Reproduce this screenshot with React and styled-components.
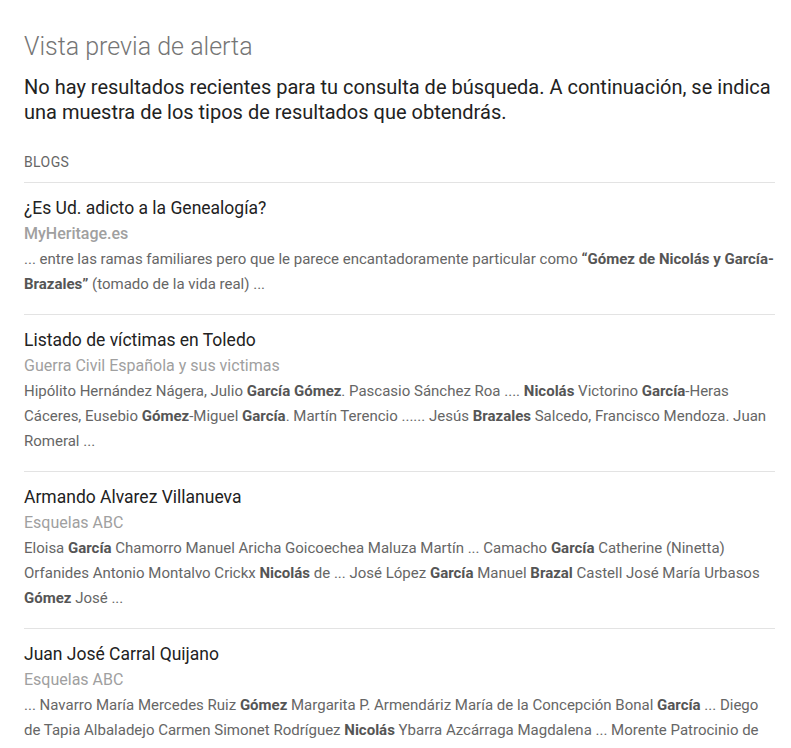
import React from "react";
import styled, { createGlobalStyle } from "styled-components";

const GlobalStyle = createGlobalStyle`
  body {
    margin: 0;
    background: #fff;
    font-family: Roboto, "Liberation Sans", Arial, sans-serif;
  }
`;

const Page = styled.div`
  padding: 31px 16px 0 24px;
  width: 791px;
  box-sizing: border-box;
  height: 748px;
  overflow: hidden;
`;

const Title = styled.h1`
  margin: 0;
  font-size: 25px;
  line-height: 32px;
  font-weight: 300;
  color: #757575;
`;

const Notice = styled.p`
  margin: 12px 0 0;
  font-size: 20px;
  line-height: 25px;
  color: #222;
`;

const Section = styled.div`
  margin: 27px 0 10px;
  font-size: 14px;
  line-height: 20px;
  letter-spacing: 0.4px;
  color: #666;
  text-transform: uppercase;
`;

const Item = styled.div`
  border-top: 1px solid #e3e3e3;
  padding: 12px 0 17px;
`;

const ItemTitle = styled.div`
  font-size: 17.5px;
  line-height: 26px;
  color: #222;
`;

const Source = styled.div`
  font-size: 16px;
  line-height: 26px;
  color: #a0a0a0;
  font-weight: ${p => (p.strong ? 500 : 400)};
`;

const Snippet = styled.div`
  font-size: 15px;
  line-height: 25px;
  color: #666;
  b {
    font-weight: 700;
    color: #555;
  }
`;

const results = [
  {
    title: "¿Es Ud. adicto a la Genealogía?",
    source: "MyHeritage.es",
    strong: true,
    snippet: (
      <>
        ... entre las ramas familiares pero que le parece encantadoramente particular como{" "}
        <b>“Gómez de Nicolás y García-Brazales”</b> (tomado de la vida real) ...
      </>
    )
  },
  {
    title: "Listado de víctimas en Toledo",
    source: "Guerra Civil Española y sus victimas",
    snippet: (
      <>
        Hipólito Hernández Nágera, Julio <b>García Gómez</b>. Pascasio Sánchez Roa ....{" "}
        <b>Nicolás</b> Victorino <b>García</b>-Heras Cáceres, Eusebio <b>Gómez</b>-Miguel{" "}
        <b>García</b>. Martín Terencio ...... Jesús <b>Brazales</b> Salcedo, Francisco Mendoza.
        Juan Romeral ...
      </>
    )
  },
  {
    title: "Armando Alvarez Villanueva",
    source: "Esquelas ABC",
    snippet: (
      <>
        Eloisa <b>García</b> Chamorro Manuel Aricha Goicoechea Maluza Martín ... Camacho{" "}
        <b>García</b> Catherine (Ninetta) Orfanides Antonio Montalvo Crickx <b>Nicolás</b> de ...
        José López <b>García</b> Manuel <b>Brazal</b> Castell José María Urbasos <b>Gómez</b> José
        ...
      </>
    )
  },
  {
    title: "Juan José Carral Quijano",
    source: "Esquelas ABC",
    snippet: (
      <>
        ... Navarro María Mercedes Ruiz <b>Gómez</b> Margarita P. Armendáriz María de la
        Concepción Bonal <b>García</b> ... Diego de Tapia Albaladejo Carmen Simonet Rodríguez{" "}
        <b>Nicolás</b> Ybarra Azcárraga Magdalena ... Morente Patrocinio de Morales ...
      </>
    )
  }
];

export default function App() {
  return (
    <>
      <GlobalStyle />
      <Page>
        <Title>Vista previa de alerta</Title>
        <Notice>
          No hay resultados recientes para tu consulta de búsqueda. A continuación, se indica
          una muestra de los tipos de resultados que obtendrás.
        </Notice>
        <Section>Blogs</Section>
        {results.map(r => (
          <Item key={r.title}>
            <ItemTitle>{r.title}</ItemTitle>
            <Source strong={r.strong}>{r.source}</Source>
            <Snippet>{r.snippet}</Snippet>
          </Item>
        ))}
      </Page>
    </>
  );
}
